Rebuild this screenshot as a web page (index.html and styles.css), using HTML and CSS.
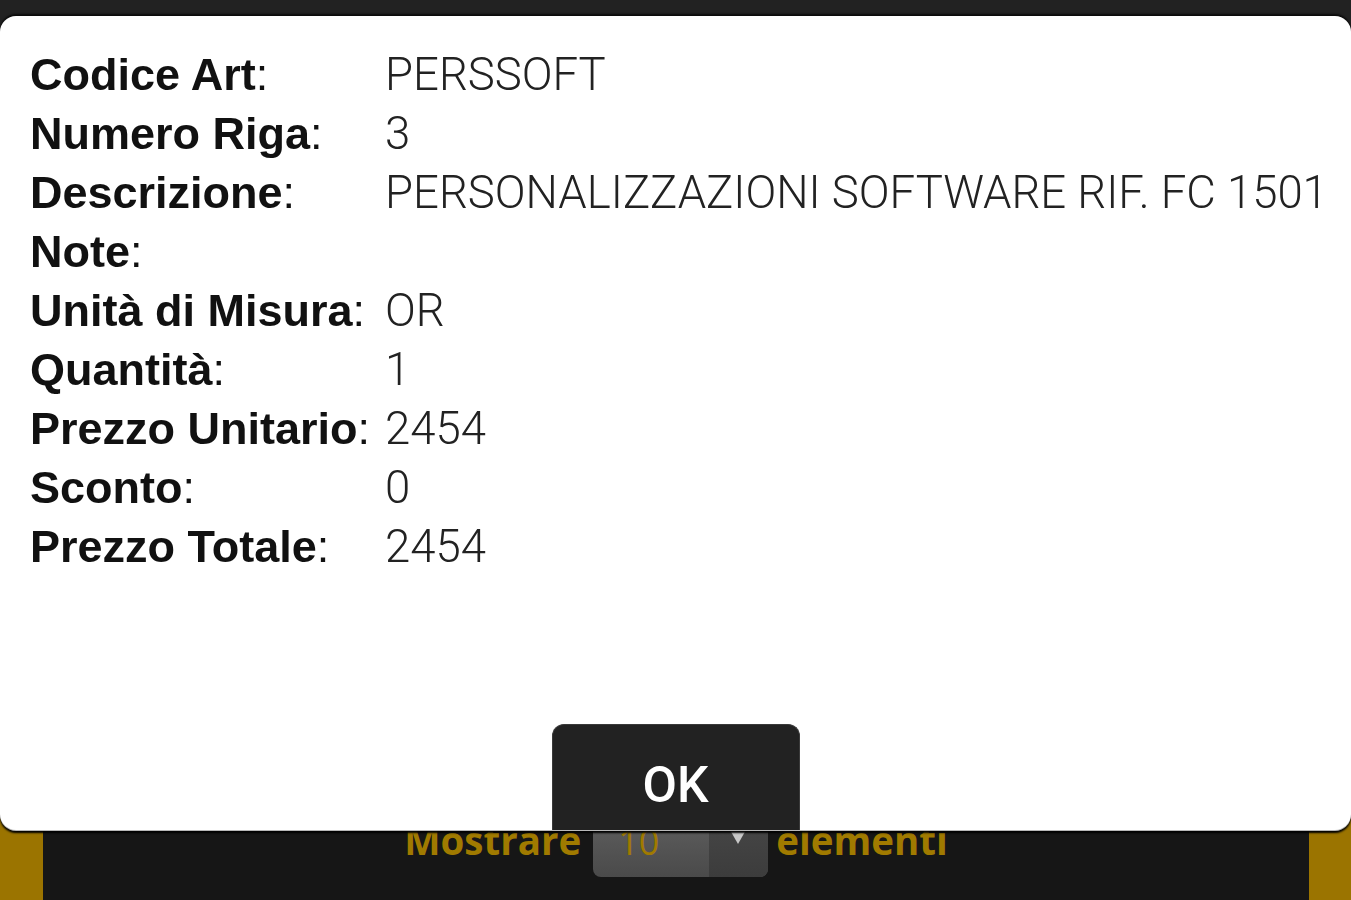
FILE: index.html
```html
<!DOCTYPE html>
<html>
<head>
  <meta charset="utf-8">
  <link rel="stylesheet" href="styles.css">
</head>
<body>
  <div class="topbar"></div>

  <div class="page">
    <div class="panel">
      <div class="length-row">
        <span class="length-label">Mostrare</span>
        <div class="length-select">
          <span class="length-value">10</span>
          <span class="length-arrow"></span>
        </div>
        <span class="length-label">elementi</span>
      </div>
    </div>
  </div>

  <div class="dialog">
    <div class="detail-list">
      <div class="detail-key"><b>Codice Art</b>:</div>
      <div class="detail-val">PERSSOFT</div>
      <div class="detail-key"><b>Numero Riga</b>:</div>
      <div class="detail-val">3</div>
      <div class="detail-key"><b>Descrizione</b>:</div>
      <div class="detail-val">PERSONALIZZAZIONI SOFTWARE RIF. FC 1501</div>
      <div class="detail-key"><b>Note</b>:</div>
      <div class="detail-val"></div>
      <div class="detail-key"><b>Unità di Misura</b>:</div>
      <div class="detail-val">OR</div>
      <div class="detail-key"><b>Quantità</b>:</div>
      <div class="detail-val">1</div>
      <div class="detail-key"><b>Prezzo Unitario</b>:</div>
      <div class="detail-val">2454</div>
      <div class="detail-key"><b>Sconto</b>:</div>
      <div class="detail-val">0</div>
      <div class="detail-key"><b>Prezzo Totale</b>:</div>
      <div class="detail-val">2454</div>
    </div>
    <div class="dialog-footer">
      <button class="ok-button">OK</button>
    </div>
  </div>
</body>
</html>
```

FILE: styles.css
```css
/* page behind the dialog */

body {
  margin: 0;
  background: #9b7400;
  font-family: "Liberation Sans", Arial, sans-serif;
  overflow: hidden;
}

.topbar {
  height: 60px;
  background: #222222;
}

.page {
  padding: 0 42px 0 43px;
}

.panel {
  background: #161616;
  height: 840px;
  box-sizing: border-box;
  padding-top: 757px;
}

.length-row {
  display: flex;
  justify-content: center;
  align-items: flex-start;
  gap: 8px;
}

.length-label {
  font-family: "Open Sans", sans-serif;
  font-weight: bold;
  font-size: 38.5px;
  line-height: 47px;
  color: #a07a00;
}

.length-select {
  display: flex;
  width: 175px;
  height: 60px;
  margin-left: 4px;
  border-radius: 8px;
  overflow: hidden;
  background: linear-gradient(to bottom, #5e5e5e, #4a4a4a);
}

.length-value {
  flex: 1;
  padding-left: 25px;
  font-family: "Open Sans", sans-serif;
  font-size: 36px;
  line-height: 50px;
  color: #a07a00;
}

.length-arrow {
  position: relative;
  width: 59px;
  background: linear-gradient(to bottom, #474747, #3c3c3c);
}

.length-arrow::after {
  content: "";
  position: absolute;
  top: 13px;
  left: 21px;
  border-left: 8px solid transparent;
  border-right: 8px solid transparent;
  border-top: 14px solid #c8c8c8;
}

/* dialog */

.dialog {
  position: fixed;
  top: 16px;
  left: 0;
  right: 0;
  height: 814px;
  box-sizing: border-box;
  background: #ffffff;
  border-radius: 16px;
  box-shadow: 0 -2px 2px rgba(0, 0, 0, 0.7), 0 1px 0 #b8b8b8, 0 3px 2px #000000;
  padding: 29px 0 0 30px;
  display: flex;
  flex-direction: column;
}

.detail-list {
  display: grid;
  grid-template-columns: 355px 1fr;
  grid-auto-rows: 59px;
  align-items: baseline;
}

.detail-key {
  font-size: 45px;
  line-height: 59px;
  color: #111111;
}

.detail-val {
  font-family: Roboto, "Liberation Sans", sans-serif;
  font-weight: 300;
  font-size: 45.5px;
  line-height: 59px;
  color: #222222;
  white-space: nowrap;
}

.dialog-footer {
  margin-top: auto;
  display: flex;
  justify-content: center;
  padding-right: 30px;
}

.ok-button {
  width: 248px;
  height: 106px;
  border: 1px solid #3a3a3a;
  border-bottom: none;
  border-radius: 12px 12px 0 0;
  background: #222222;
  color: #ffffff;
  font-family: Roboto, "Liberation Sans", sans-serif;
  font-weight: 500;
  font-size: 50px;
  padding-top: 16px;
}
```
